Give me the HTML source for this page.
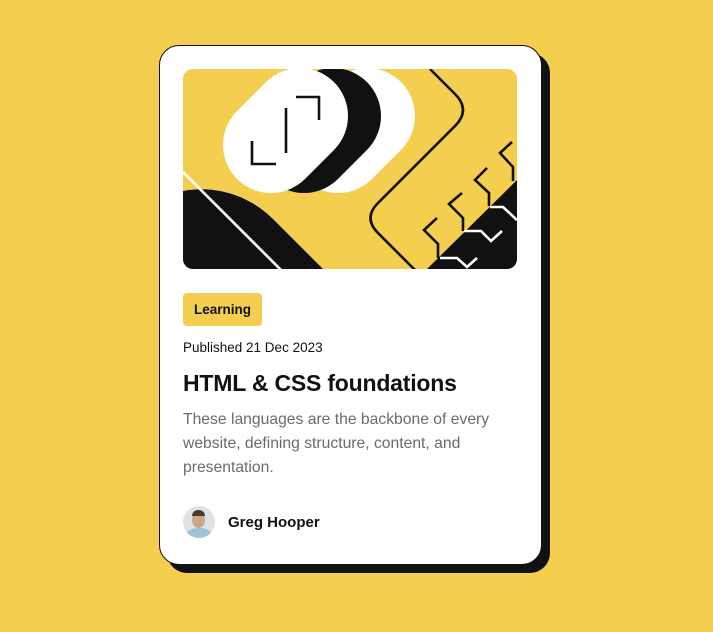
<!DOCTYPE html>
<html><head><meta charset="utf-8"><style>
*{margin:0;padding:0;box-sizing:border-box}
body{width:713px;height:632px;background:#f4ce4e;font-family:"Liberation Sans",sans-serif;position:relative;overflow:hidden}
.card{position:absolute;left:159px;top:45px;width:383px;height:520px;background:#fff;border:1px solid #111;border-radius:20px;box-shadow:8px 8px 0 #111}
.img{position:absolute;left:23px;top:23px;width:334px;height:200px;border-radius:10px;overflow:hidden;background:#f4ce4e}
.tag{position:absolute;left:23px;top:247px;width:79px;height:33px;background:#f4ce4e;border-radius:4px;font-weight:bold;font-size:13.5px;line-height:33px;text-align:center;color:#111}
.pub{position:absolute;left:23px;top:294px;font-size:13.5px;color:#111}
h1{position:absolute;left:23px;top:324px;font-size:23px;font-weight:bold;color:#111;letter-spacing:-0.2px}
.desc{position:absolute;left:23px;top:362px;width:335px;font-size:15.7px;line-height:24px;color:#6b6b6b}
.av{position:absolute;left:23px;top:460px;width:32px;height:32px;border-radius:50%;background:#dfe3e6;overflow:hidden}
.name{position:absolute;left:68px;top:468px;font-size:15px;font-weight:bold;color:#111}
</style></head><body>
<div class="card">
<div class="img"><svg width="334" height="200" viewBox="0 0 334 200">
<line x1="155" y1="76" x2="184" y2="47" stroke="#fff" stroke-width="96" stroke-linecap="round"/>
<line x1="121" y1="76" x2="150" y2="47" stroke="#111" stroke-width="96" stroke-linecap="round"/>
<line x1="88" y1="76" x2="117" y2="47" stroke="#fff" stroke-width="96" stroke-linecap="round"/>
<g stroke="#111" stroke-width="2.6" fill="none">
<path d="M113,28 L136,28 L136,51"/><path d="M103,39 L103,84"/><path d="M69,72 L69,95 L93,95"/>
</g>
<path d="M0,122 C30,116 65,125 90,150 L140,200 L0,200 Z" fill="#111"/>
<line x1="0" y1="103" x2="99" y2="202" stroke="#fff" stroke-width="2.6"/>
<path d="M247,0 L272,25 Q288,41 272,57 L195,134 Q180,149 195,164 L232,201" stroke="#111" stroke-width="2.6" fill="none"/>
<polygon points="334,111 334,200 244,200" fill="#111"/>
<g stroke="#111" stroke-width="2.6" fill="none">
<path d="M254,149 L241,161 L255,175 L255,189"/>
<path d="M279,124 L266,135 L280,149 L280,162"/>
<path d="M304,99 L292,111 L306,124 L306,137"/>
<path d="M329,73 L317,84 L330,98 L330,112"/>
</g>
<g stroke="#fff" stroke-width="2.6" fill="none">
<path d="M257,189 L274,189 L284,198 L294,189"/>
<path d="M281,162 L298,162 L308,172 L319,162"/>
<path d="M307,138 L320,138 L334,151"/>
</g>
</svg></div>
<div class="tag">Learning</div>
<div class="pub">Published 21 Dec 2023</div>
<h1>HTML &amp; CSS foundations</h1>
<div class="desc">These languages are the backbone of every website, defining structure, content, and presentation.</div>
<div class="av"><div style="position:absolute;left:9px;top:6px;width:13px;height:16px;border-radius:50%;background:#c9a58c"></div><div style="position:absolute;left:9px;top:4px;width:13px;height:6px;border-radius:6px 6px 0 0;background:#4a3a30"></div><div style="position:absolute;left:3px;top:22px;width:26px;height:14px;border-radius:50%;background:#9cc3d8"></div></div>
<div class="name">Greg Hooper</div>
</div>
</body></html>
